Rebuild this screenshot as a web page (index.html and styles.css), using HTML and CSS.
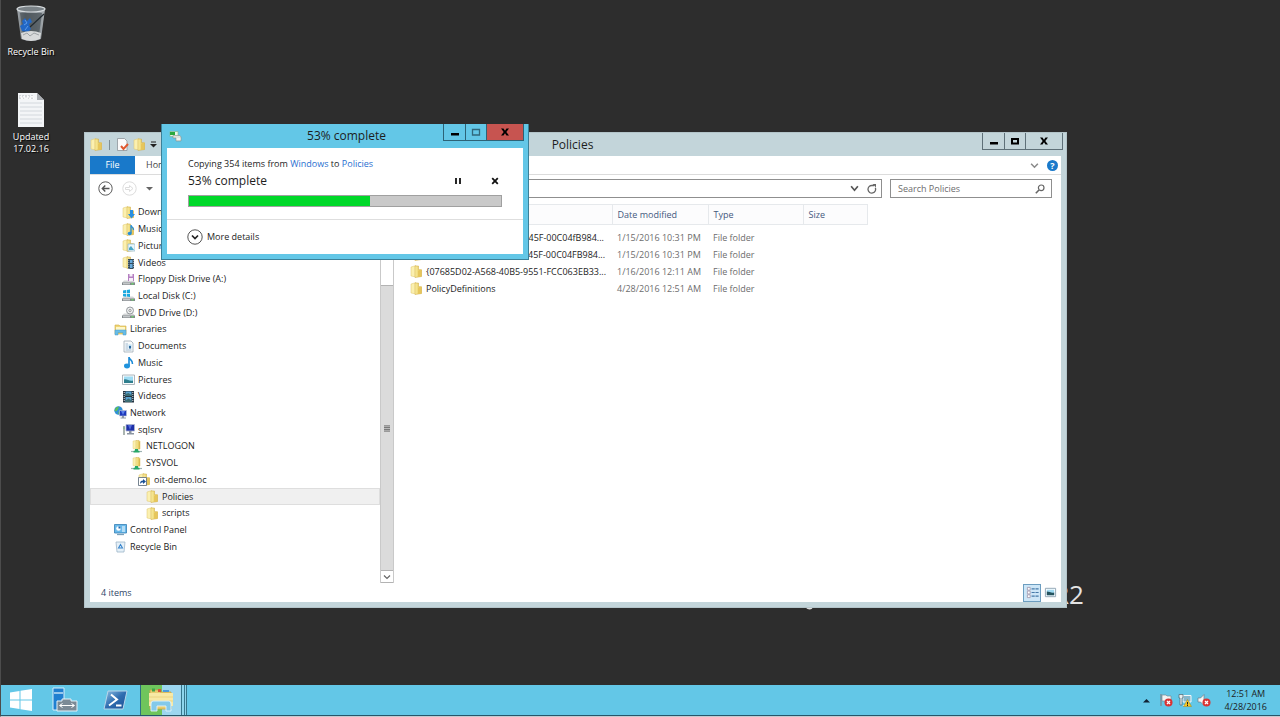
FILE: index.html
```html
<!DOCTYPE html>
<html lang="en">
<head>
<meta charset="utf-8">
<title>53% complete</title>
<link rel="stylesheet" href="styles.css">
</head>
<body>
<svg class="defs" aria-hidden="true">
  <defs>
    <linearGradient id="gold" x1="0" x2="1" y1="0" y2="0"><stop offset="0" stop-color="#fbf0a8"/><stop offset="0.45" stop-color="#efd978"/><stop offset="1" stop-color="#d6b548"/></linearGradient>
    <linearGradient id="glass" x1="0" x2="1" y1="0" y2="0"><stop offset="0" stop-color="#b9c0c5"/><stop offset="0.3" stop-color="#69727a"/><stop offset="0.7" stop-color="#8b949b"/><stop offset="1" stop-color="#c5cbcf"/></linearGradient>
    <linearGradient id="ps" x1="0" x2="1" y1="0" y2="1"><stop offset="0" stop-color="#8fc0e4"/><stop offset="0.5" stop-color="#2f6db0"/><stop offset="1" stop-color="#1b4f94"/></linearGradient>
    <symbol id="folder" viewBox="0 0 13 13">
      <path d="M1 2l5-1.500v11.500l-5-1z" fill="#fbf0b0" stroke="#dfc76c" stroke-width=".5"/>
      <path d="M5 1h3.500v3.500l3 .5v6.500l-3 .5-3.500.5z" fill="url(#gold)" stroke="#cfa942" stroke-width=".5"/>
      <path d="M8 6l3.500-2v7.500l-3.500.5z" fill="#e6c65c"/>
    </symbol>
    <symbol id="f-down" viewBox="0 0 13 13"><use href="#folder"/><path d="M8 4h3v4h2l-3.500 4.500L6 8h2z" fill="#2a8fe0"/></symbol>
    <symbol id="f-music" viewBox="0 0 13 13"><use href="#folder"/><path d="M9 2v8M9 2c0 2 3 2.500 2.500 5" fill="none" stroke="#258ed8" stroke-width="1.300"/><ellipse cx="7.700" cy="10.500" rx="2" ry="1.700" fill="#258ed8"/></symbol>
    <symbol id="f-pic" viewBox="0 0 13 13"><use href="#folder"/><path d="M6 5h7v7H6z" fill="#e8f6fc" stroke="#8cb4c8" stroke-width=".7"/><path d="M7 11V9l2-2 3 4z" fill="#4aa7c6"/></symbol>
    <symbol id="f-video" viewBox="0 0 13 13"><use href="#folder"/><path d="M6 3h6v10H6z" fill="#334b5c"/><path d="M8 4h2.500v3H8zM8 8h2.500v4H8z" fill="#67aadb"/><path d="M6.800 4v9M11.500 4v9" stroke="#d8e1e6" stroke-width=".6" stroke-dasharray="1 1"/></symbol>
    <symbol id="drive" viewBox="0 0 13 13"><path d="M2 7.500h9l2 2v2.500H0V9.500z" fill="#d4d6d7"/><path d="M0 9.500h13V12H0z" fill="#83898c"/><path d="M1 10.800h7" stroke="#dfe2e3"/><path d="M9.500 10h2v1.500h-2z" fill="#6bd46b"/></symbol>
    <symbol id="floppy" viewBox="0 0 13 13"><use href="#drive"/><path d="M6 1h6v7H6z" fill="#b57fc2"/><path d="M7.500 1h3v2.500h-3zM7 5h4v3H7z" fill="#f6eff8"/></symbol>
    <symbol id="cdisk" viewBox="0 0 13 13"><use href="#drive"/><path d="M1 1.500L4 1v3H1zM4.700 1L8 .5V4H4.700zM1 4.700h3v3L1 7.200zM4.700 4.700H8V8l-3.300-.4z" fill="#1aa8df"/></symbol>
    <symbol id="dvd" viewBox="0 0 13 13"><use href="#drive"/><circle cx="8" cy="4.500" r="3.500" fill="#eceeef" stroke="#8d9295" stroke-width=".9"/><circle cx="8" cy="4.500" r="1.100" fill="#fff" stroke="#777" stroke-width=".7"/></symbol>
    <symbol id="lib" viewBox="0 0 13 13"><path d="M1 2h4l1 1h6v8H1z" fill="#efd676" stroke="#d0ac45" stroke-width=".6"/><path d="M2 4h9v3H2z" fill="#fff7c8"/><path d="M1 7h11v5H9V9.500H4V12H1z" fill="#68bde7" stroke="#4498c8" stroke-width=".5"/></symbol>
    <symbol id="doc" viewBox="0 0 13 13"><path d="M2 1h7l2 2v9H2z" fill="#f8fafb" stroke="#9fabb5" stroke-width=".8"/><path d="M3.500 4H6M3.500 6H6M3.500 8H6M3.500 10h6" stroke="#8aa9c6" stroke-width=".8"/><path d="M6.500 4.500h3v4h-3z" fill="#b5dcf2"/><path d="M7 6h2v2.500H7z" fill="#2c669c"/></symbol>
    <symbol id="note" viewBox="0 0 13 13"><path d="M7 1v9M7 1c0 3 4 2.500 3.500 7" fill="none" stroke="#1889d6" stroke-width="1.600"/><ellipse cx="5" cy="10" rx="3" ry="2.400" fill="#1f93dd"/></symbol>
    <symbol id="pic" viewBox="0 0 13 13"><path d="M.5 2h12v9.500H.5z" fill="#f9fbfc" stroke="#9aa6ad" stroke-width=".8"/><path d="M2 3.500h9V10H2z" fill="#9edcf4"/><path d="M2 6.500c3-1 5 2 9 1V10H2z" fill="#2e7e8d"/></symbol>
    <symbol id="film" viewBox="0 0 13 13"><path d="M1 1h11v11.500H1z" fill="#243441"/><path d="M3.500 1.500h6v4.500h-6zM3.500 7h6v5h-6z" fill="#58a1cf"/><path d="M3.500 4l3-1 3 2v1h-6zM3.500 10.500l3-2 3 2V12h-6z" fill="#3c6d73"/><path d="M2.200 2v10M10.800 2v10" stroke="#edf1f3" stroke-width=".9" stroke-dasharray="1 1"/></symbol>
    <symbol id="net" viewBox="0 0 13 13"><circle cx="4.500" cy="4.500" r="4.200" fill="#2f8fd8"/><path d="M2 1.500l3-1-1 3-2 2-1.500-1zM5 5l2 .500-1 3-2-1z" fill="#61bf57"/><path d="M5.500 4.500h7V10h-7z" fill="#1d37ba" stroke="#b4c0d8" stroke-width=".7"/><path d="M7 5l4 0-2 4z" fill="#5b80ea"/><path d="M8 10h2v1.500h2v1H6.500v-1H8z" fill="#8c97a6"/></symbol>
    <symbol id="pc" viewBox="0 0 13 13"><path d="M1 3h2v9H1z" fill="#aab4b0"/><path d="M1.500 4.500h1v1h-1z" fill="#48b64d"/><path d="M4 1.500h8.500V8H4z" fill="#1d2fa8" stroke="#aeb8cf" stroke-width=".8"/><path d="M6 2h4L8 7z" fill="#536ad8"/><path d="M7 8h2.500v2H12v1.500H5V10h2z" fill="#8b95a1"/></symbol>
    <symbol id="share" viewBox="0 0 13 13"><path d="M3 1l3.500-.5v9l-3.500-1z" fill="#fbf0b0" stroke="#dfc76c" stroke-width=".4"/><path d="M6 .5h3l1 1V9L6 9.500z" fill="url(#gold)" stroke="#cfa942" stroke-width=".4"/><path d="M1 11.500h11" stroke="#9fb4b4" stroke-width="1.200"/><path d="M5 9h3v1.500l1.500.5v1.500H3.500V11L5 10.500z" fill="#28a869"/></symbol>
    <symbol id="f-link" viewBox="0 0 13 13"><use href="#folder"/><path d="M.5 4.500h8v8h-8z" fill="#fff" stroke="#567" stroke-width=".8"/><path d="M2 11c0-2.500 1-3.500 3-3.500V6l3 2.500-3 2.500V9.300C3.800 9.300 2.800 10 2 11z" fill="#1b5096"/></symbol>
    <symbol id="cpl" viewBox="0 0 13 13"><path d="M.5 1.500h12V10H.5z" fill="#69b9ea" stroke="#337fb5" stroke-width=".8"/><circle cx="4.500" cy="5.500" r="2.300" fill="#fff"/><path d="M4.500 5.500V3.200a2.300 2.300 0 0 1 2.300 2.300z" fill="#206db3"/><path d="M8 4h3M8 6h3M8 8h3" stroke="#fff"/><path d="M3 11.500h7" stroke="#7aa0ba" stroke-width="1.300"/></symbol>
    <symbol id="bin" viewBox="0 0 13 13"><path d="M2 2h9l-1 10H3z" fill="#e5f0f8" stroke="#9db5c8" stroke-width=".8"/><path d="M4.500 8L6.500 4.500 8.500 8z" fill="none" stroke="#3583cc" stroke-width="1.100"/></symbol>
  </defs>
</svg>

<main class="desktop">
  <span class="wallpaper-mark">R2</span>
  <svg class="wallpaper-tail" viewBox="0 0 8 4" aria-hidden="true"><path d="M1 0q3 3 6 1" fill="none" stroke="#ddd" stroke-width="1.500"/></svg>

  <a class="shortcut shortcut-bin" href="#bin">
    <svg viewBox="0 0 30 38">
      <path d="M1 4h28l-4 30q-10 4-20 0z" fill="url(#glass)" opacity=".85"/>
      <path d="M4 8h22l-3 22H7z" fill="#4a5258" opacity=".7"/>
      <ellipse cx="15" cy="4" rx="14" ry="3" fill="#7a8287" stroke="#d7dcdf" stroke-width="1.200"/>
      <path d="M6 16l3-3 2 3 3-3 2 4-3 2 2 5-3 3-6-1-2-5 3-2z" fill="#2167c5"/>
      <path d="M9 15l2 3-3 2M12 21l-3 4" fill="none" stroke="#5e9be8"/>
      <path d="M28 9L14 22" stroke="#222a30" stroke-width="1.200"/>
      <path d="M5 28q10-4 20 0l-1 6q-9 4-18 0z" fill="#d8dadb"/>
      <path d="M7 30l4-2 3 3 4-3 5 2" fill="none" stroke="#9ea3a6"/>
    </svg>
    <span>Recycle Bin</span>
  </a>
  <a class="shortcut shortcut-file" href="#updated">
    <svg viewBox="0 0 28 36">
      <path d="M1 1h19l7 7v27H1z" fill="#f3f5f7"/>
      <path d="M3 11h22M3 15h22M3 19h22M3 23h22M3 27h22M3 31h22" stroke="#d3d8dd"/>
      <path d="M3 3v4M6 3v4M9 3v4M12 3v4M15 3v4" stroke="#b5b9bd"/>
      <path d="M20 1v7h7z" fill="#a9adb2"/>
      <path d="M3 4l2 3 2-3 2 3 2-3 2 3 2-3 2 3" fill="none" stroke="#fff"/>
    </svg>
    <span>Updated 17.02.16</span>
  </a>

  <section class="window explorer" aria-label="Policies">
    <header class="titlebar">
      <div class="quick">
        <svg class="icon"><use href="#folder"/></svg>
        <i class="bar"></i>
        <svg class="icon" viewBox="0 0 13 13"><path d="M1.500.5h7L11 3v9.500H1.500z" fill="#fafafa" stroke="#8e969b" stroke-width=".8"/><path d="M5 8l2.500 3L12 6" fill="none" stroke="#e0592f" stroke-width="2"/></svg>
        <svg class="icon"><use href="#folder"/></svg>
        <svg class="tiny" viewBox="0 0 7 7"><path d="M1 1h5" stroke="#222"/><path d="M0 3h7L3.500 6.500z" fill="#222"/></svg>
      </div>
      <h1>Policies</h1>
      <div class="controls">
        <button class="b-min" aria-label="Minimize"><svg viewBox="0 0 10 10"><path d="M1 6h8v2.500H1z"/></svg></button>
        <button class="b-max" aria-label="Maximize"><svg viewBox="0 0 10 10"><path d="M1 2h8v6.500H1zM3 4v2.500h4V4z" fill-rule="evenodd"/></svg></button>
        <button class="b-close" aria-label="Close"><svg viewBox="0 0 10 10"><path d="M1 1.500h2.500L5 3.700l1.500-2.200H9L6.300 5 9 8.500H6.500L5 6.300 3.500 8.500H1L3.700 5z"/></svg></button>
      </div>
    </header>
    <div class="client">
      <nav class="ribbon">
        <button class="file-tab">File</button>
        <button class="tab">Home</button>
        <svg class="chev" viewBox="0 0 8 8"><path d="M1 2.500l3 3 3-3" fill="none" stroke="#8a8a8a" stroke-width="1.400"/></svg>
        <button class="help" aria-label="Help">?</button>
      </nav>
      <div class="navrow">
        <button class="round" aria-label="Back"><svg viewBox="0 0 15 15"><circle cx="7.500" cy="7.500" r="6.700" fill="#fff" stroke="#5b5b5b"/><path d="M11.500 7.500h-7M7.300 4.500l-3 3 3 3" fill="none" stroke="#555" stroke-width="1.400"/></svg></button>
        <button class="round" aria-label="Forward"><svg viewBox="0 0 15 15"><circle cx="7.500" cy="7.500" r="6.700" fill="#fff" stroke="#dcdcdc"/><path d="M3.500 6.500h4v-2l3.500 3-3.500 3v-2h-4z" fill="none" stroke="#dcdcdc"/></svg></button>
        <svg class="tiny" viewBox="0 0 7 7"><path d="M0 2h7L3.500 5.500z" fill="#666"/></svg>
        <div class="address">
          <svg class="chev" viewBox="0 0 8 8"><path d="M1 2l3 3.500L7 2" fill="none" stroke="#555" stroke-width="1.500"/></svg>
          <svg class="reload" viewBox="0 0 10 10"><path d="M8.300 3.800A3.800 3.800 0 1 1 5 1.500h2" fill="none" stroke="#666" stroke-width="1.300"/><path d="M5.500 0H9v3.500z" fill="#666"/></svg>
        </div>
        <label class="search"><input type="text" placeholder="Search Policies" aria-label="Search Policies"><svg viewBox="0 0 10 10"><circle cx="6.200" cy="3.800" r="2.800" fill="none" stroke="#666" stroke-width="1.200"/><path d="M4 6L.8 9.200" stroke="#666" stroke-width="1.600"/></svg></label>
      </div>
      <div class="panes">
        <ul class="tree">
          <li class="l2"><svg class="icon"><use href="#f-down"/></svg>Downloads</li>
          <li class="l2"><svg class="icon"><use href="#f-music"/></svg>Music</li>
          <li class="l2"><svg class="icon"><use href="#f-pic"/></svg>Pictures</li>
          <li class="l2"><svg class="icon"><use href="#f-video"/></svg>Videos</li>
          <li class="l2"><svg class="icon"><use href="#floppy"/></svg>Floppy Disk Drive (A:)</li>
          <li class="l2"><svg class="icon"><use href="#cdisk"/></svg>Local Disk (C:)</li>
          <li class="l2"><svg class="icon"><use href="#dvd"/></svg>DVD Drive (D:)</li>
          <li class="l1"><svg class="icon"><use href="#lib"/></svg>Libraries</li>
          <li class="l2"><svg class="icon"><use href="#doc"/></svg>Documents</li>
          <li class="l2"><svg class="icon"><use href="#note"/></svg>Music</li>
          <li class="l2"><svg class="icon"><use href="#pic"/></svg>Pictures</li>
          <li class="l2"><svg class="icon"><use href="#film"/></svg>Videos</li>
          <li class="l1"><svg class="icon"><use href="#net"/></svg>Network</li>
          <li class="l2"><svg class="icon"><use href="#pc"/></svg>sqlsrv</li>
          <li class="l3"><svg class="icon"><use href="#share"/></svg>NETLOGON</li>
          <li class="l3"><svg class="icon"><use href="#share"/></svg>SYSVOL</li>
          <li class="l4"><svg class="icon"><use href="#f-link"/></svg>oit-demo.loc</li>
          <li class="l5 selected"><svg class="icon"><use href="#folder"/></svg>Policies</li>
          <li class="l5"><svg class="icon"><use href="#folder"/></svg>scripts</li>
          <li class="l1"><svg class="icon"><use href="#cpl"/></svg>Control Panel</li>
          <li class="l1"><svg class="icon"><use href="#bin"/></svg>Recycle Bin</li>
        </ul>
        <div class="scroll">
          <div class="thumb"><svg viewBox="0 0 7 7"><path d="M0 .5h7M0 2.500h7M0 4.500h7M0 6.500h7" stroke="#555"/></svg></div>
          <button class="down" aria-label="Scroll down"><svg viewBox="0 0 8 8"><path d="M1 2.500l3 3 3-3" fill="none" stroke="#666" stroke-width="1.200"/></svg></button>
        </div>
        <div class="list">
          <table>
            <colgroup><col class="c-name"><col class="c-date"><col class="c-type"><col class="c-size"></colgroup>
            <thead><tr><th>Name</th><th>Date modified</th><th>Type</th><th>Size</th></tr></thead>
            <tbody>
              <tr><td><svg class="icon"><use href="#folder"/></svg>{31B2F340-016D-11D2-945F-00C04fB984...</td><td>1/15/2016 10:31 PM</td><td>File folder</td><td></td></tr>
              <tr><td><svg class="icon"><use href="#folder"/></svg>{6AC1786C-016F-11D2-945F-00C04FB984...</td><td>1/15/2016 10:31 PM</td><td>File folder</td><td></td></tr>
              <tr><td><svg class="icon"><use href="#folder"/></svg>{07685D02-A568-40B5-9551-FCC063EB33...</td><td>1/16/2016 12:11 AM</td><td>File folder</td><td></td></tr>
              <tr><td><svg class="icon"><use href="#folder"/></svg>PolicyDefinitions</td><td>4/28/2016 12:51 AM</td><td>File folder</td><td></td></tr>
            </tbody>
          </table>
        </div>
      </div>
      <footer class="status">
        <span>4 items</span>
        <button class="view on" aria-label="Details view"><svg viewBox="0 0 14 14"><path d="M1.500 1.500h3v3h-3zM1.500 5.500h3v3h-3zM1.500 9.500h3v3h-3z" fill="#fff" stroke="#9a8ea5" stroke-width=".8"/><path d="M6 3h8M6 7h8M6 11h8" stroke="#4679a8" stroke-width="1.300" stroke-dasharray="3.400 .8"/></svg></button>
        <button class="view" aria-label="Large icons view"><svg viewBox="0 0 14 14"><path d="M1.500 2.500h11v9h-11z" fill="#fff" stroke="#8ea3b3"/><path d="M3 4h8v6H3z" fill="#9fdaf2"/><path d="M3 6c3 0 5 2 8 1v3H3z" fill="#24525e"/></svg></button>
      </footer>
    </div>
  </section>

  <section class="window dialog" role="dialog" aria-label="53% complete">
    <header class="titlebar">
      <svg class="icon" viewBox="0 0 13 13"><path d="M1 1.500h8v5H1z" fill="#eaf7e7" stroke="#82b584" stroke-width=".6"/><path d="M1 2h5v3H1z" fill="#28a83d"/><path d="M4 5.500h7l1 1.500v4H7V8H4z" fill="#dfe4df" stroke="#89928b" stroke-width=".6"/><path d="M7.500 9h4" stroke="#fff"/></svg>
      <h2>53% complete</h2>
      <div class="controls">
        <button class="b-min" aria-label="Minimize"><svg viewBox="0 0 10 10"><path d="M1 6h8v2.500H1z"/></svg></button>
        <button class="b-max" aria-label="Maximize" disabled><svg viewBox="0 0 10 10"><path d="M1.500 2.500h7v5.500h-7z" fill="none" stroke="#31687c" stroke-width="1.300"/></svg></button>
        <button class="b-close" aria-label="Close"><svg viewBox="0 0 10 10"><path d="M1 1.500h2.500L5 3.700l1.500-2.200H9L6.300 5 9 8.500H6.500L5 6.300 3.500 8.500H1L3.700 5z"/></svg></button>
      </div>
    </header>
    <div class="client">
      <div class="copy">
        <p>Copying 354 items from <a href="#windows">Windows</a> to <a href="#policies">Policies</a></p>
        <div class="state">
          <strong id="pct">53% complete</strong>
          <button aria-label="Pause"><svg viewBox="0 0 8 8"><path d="M2 1v6M6 1v6" stroke="#111" stroke-width="1.800"/></svg></button>
          <button aria-label="Cancel"><svg viewBox="0 0 8 8"><path d="M1.200 1.200l5.600 5.600M6.800 1.200L1.200 6.800" stroke="#111" stroke-width="1.800"/></svg></button>
        </div>
        <progress max="100" value="58" aria-labelledby="pct"></progress>
      </div>
      <button class="more"><svg viewBox="0 0 16 16"><circle cx="8" cy="8" r="7.200" fill="#fff" stroke="#555"/><path d="M5 6.500l3 3 3-3" fill="none" stroke="#222" stroke-width="1.700"/></svg>More details</button>
    </div>
  </section>
</main>

<footer class="taskbar">
  <button aria-label="Start"><svg class="start" viewBox="0 0 22 22"><path d="M0 3.500L9.500 2v8.500H0zM10.500 1.800L22 0v10.500H10.500zM0 11.500h9.500V20L0 18.500zM10.500 11.500H22V22l-11.500-1.700z" fill="#fff"/></svg></button>
  <button aria-label="Server Manager"><svg class="app" viewBox="0 0 26 26"><path d="M1 1h11v22H1z" fill="#1f7fd0" stroke="#d8effa"/><path d="M2 6h9" stroke="#d8effa" stroke-width="1.300"/><path d="M10 14v-2h9v2h6v10H5V14z" fill="#7b8a96" stroke="#e6f2f8"/><path d="M8 18.500h14M10.500 16.500l-3 2 3 2M19.500 16.500l3 2-3 2" fill="none" stroke="#fff"/></svg></button>
  <button aria-label="PowerShell"><svg class="app" viewBox="0 0 26 26"><path d="M6 4h19l-4 18H2z" fill="url(#ps)" stroke="#b8d5e9"/><path d="M9 7.500l6 5-8 6M14 18.500h5.500" fill="none" stroke="#fff" stroke-width="2"/></svg></button>
  <button class="active" aria-label="File Explorer"><svg class="app" viewBox="0 0 26 26"><path d="M2 3h8l2 2h11v17H2z" fill="#e9cd70" stroke="#c7a345" stroke-width=".8"/><path d="M4 1.500h3v3H4z" fill="#3fa64a"/><path d="M10 2h3v3h-3z" fill="#d8523b"/><path d="M15 3h6v2h-6z" fill="#4c9cda"/><path d="M1 6h24v13H1z" fill="#f8e9a5"/><path d="M1 10h24M1 14h24" stroke="#ebd382"/><path d="M5 14h16q2 0 2 3v7h-5v-5H9v5H3v-7q0-3 2-3z" fill="#83c9ea" stroke="#e3f4fb" stroke-width=".9"/></svg></button>
  <i class="stack"></i>
  <i class="stack"></i>
  <div class="tray">
    <svg class="up" viewBox="0 0 7 7"><path d="M0 5.500L3.500 2 7 5.500z" fill="#123"/></svg>
    <svg viewBox="0 0 14 14"><path d="M2 1v12" stroke="#7b8a92" stroke-width="1.300"/><path d="M3 2h4l1 1h4v6H8L7 8H3z" fill="#f4f4f4" stroke="#7b8a92" stroke-width=".7"/><circle cx="9.500" cy="9.500" r="4" fill="#d93434"/><path d="M8 8l3 3M11 8l-3 3" stroke="#fff" stroke-width="1.300"/></svg>
    <svg viewBox="0 0 14 14"><path d="M5 2.500h8V9H5z" fill="#84b7cc" stroke="#f4f8fa"/><path d="M1 1.500h4V5H4v7H2V5H1z" fill="#e8eef0" stroke="#4c6570" stroke-width=".7"/><path d="M5 12.500h6" stroke="#eee"/><path d="M9.500 6.500l4 7h-8z" fill="#f6c822" stroke="#a7801b" stroke-width=".5"/><path d="M9.500 9v2.500M9.500 12v1" stroke="#222"/></svg>
    <svg viewBox="0 0 14 14"><path d="M1 5h2.500L7 1.500v11L3.500 9H1z" fill="#f6f6f6" stroke="#6a7d87" stroke-width=".7"/><circle cx="9.500" cy="9.500" r="4" fill="#d93434"/><path d="M8 8l3 3M11 8l-3 3" stroke="#fff" stroke-width="1.300"/></svg>
    <time datetime="2016-04-28T00:51">12:51 AM<br>4/28/2016</time>
  </div>
</footer>
</body>
</html>
```
FILE: styles.css
```css
* { box-sizing: border-box; }

body {
  margin: 0;
  height: 100vh;
  display: flex;
  flex-direction: column;
  overflow: hidden;
  background: #2d2d2d;
  border-left: 1px solid #4c4c4c;
  border-bottom: 1px solid #c4ccd0;
  font: 9px/16px "Open Sans", "Noto Sans", sans-serif;
  color: #1d1d1d;
}

button {
  font: inherit;
  color: inherit;
  border: 0;
  padding: 0;
  background: none;
  display: flex;
  align-items: center;
  justify-content: center;
}

a { color: #2a6fd0; text-decoration: none; }
svg { display: block; flex: none; }
.defs { position: absolute; width: 0; height: 0; }
.icon { width: 13px; height: 13px; }
.tiny { width: 7px; height: 7px; }
.chev { width: 9px; height: 9px; }

.desktop { position: relative; flex: 1; min-height: 0; }

.wallpaper-mark {
  position: absolute;
  left: 1052px;
  top: 576px;
  font-size: 26px;
  line-height: 36px;
  color: #e4e4e4;
}
.wallpaper-tail { position: absolute; left: 804px; top: 607px; width: 8px; height: 4px; }

.shortcut {
  position: absolute;
  left: 0;
  width: 60px;
  display: flex;
  flex-direction: column;
  align-items: center;
  gap: 3px;
  color: #fff;
  line-height: 12px;
  text-align: center;
  text-shadow: 1px 1px 1px #000;
}
.shortcut-bin { top: 5px; }
.shortcut-bin svg { width: 30px; height: 38px; }
.shortcut-file { top: 92px; }
.shortcut-file svg { width: 28px; height: 36px; }
.shortcut span { width: 52px; }

.window {
  position: absolute;
  display: flex;
  flex-direction: column;
  padding: 0 5px 5px;
}
.window .client { flex: 1; min-height: 0; display: flex; flex-direction: column; background: #fff; }

.titlebar { display: flex; align-items: center; height: 24px; flex: none; }
.titlebar h1, .titlebar h2 {
  flex: 1;
  margin: 0;
  text-align: center;
  font-size: 12px;
  font-weight: 400;
}
.controls { display: flex; align-self: flex-start; border: 1px solid #5e7078; border-top: 0; }
.controls button { height: 16px; width: 21px; border-right: 1px solid #5e7078; }
.controls svg { width: 10px; height: 10px; }
.controls .b-min { width: 22px; }
.controls .b-close { width: 36px; border-right: 0; }

.explorer {
  left: 83px;
  top: 132px;
  width: 983px;
  height: 476px;
  background: #c3d5da;
  border: 1px solid #b3c4c9;
}
.explorer .titlebar { height: 23px; }
.explorer .controls { margin-right: -2px; }
.quick { display: flex; align-items: center; gap: 4px; width: 73px; }
.quick .bar { width: 1px; height: 10px; margin: 0 2px; background: #7c8d94; }

.ribbon {
  display: flex;
  align-items: center;
  height: 19px;
  flex: none;
  padding-right: 3px;
  border-bottom: 1px solid #dcdcdc;
}
.file-tab { width: 45px; height: 18px; background: #1979ca; color: #fff; }
.tab { margin-left: 11px; color: #444; }
.ribbon .chev { margin-left: auto; }
.help {
  width: 11px;
  height: 11px;
  margin-left: 8px;
  border-radius: 50%;
  background: #1979ca;
  color: #fff;
  font-weight: 700;
  line-height: 11px;
}

.navrow { display: flex; align-items: center; height: 29px; flex: none; padding: 0 9px 2px 8px; }
.round { margin-right: 9px; }
.round svg { width: 15px; height: 15px; }
.address {
  flex: 1;
  display: flex;
  justify-content: flex-end;
  align-items: center;
  gap: 8px;
  height: 19px;
  margin: 0 8px 0 32px;
  padding-right: 4px;
  border: 1px solid #8f8f8f;
}
.reload { width: 10px; height: 10px; }
.search {
  width: 162px;
  height: 19px;
  display: flex;
  align-items: center;
  padding: 0 6px 0 7px;
  border: 1px solid #8f8f8f;
}
.search input { flex: 1; min-width: 0; padding: 0; border: 0; outline: 0; font: inherit; background: none; }
.search input::placeholder { color: #6d6d6d; }
.search svg { width: 10px; height: 10px; }

.panes { flex: 1; min-height: 0; display: flex; }
.tree {
  width: 290px;
  height: 351px;
  margin: 0;
  padding: 0;
  list-style: none;
  display: grid;
  grid-template-rows: repeat(21, 1fr);
}
.tree li { display: flex; align-items: center; gap: 3px; border: 1px solid transparent; min-height: 0; }
.tree .l1 { padding-left: 23px; }
.tree .l2 { padding-left: 31px; }
.tree .l3 { padding-left: 39px; }
.tree .l4 { padding-left: 47px; }
.tree .l5 { padding-left: 55px; }
.tree .selected { background: #f0f0f0; border-color: #dedede; }

.scroll {
  width: 14px;
  display: flex;
  flex-direction: column;
  padding-top: 81px;
  border-right: 1px solid #c9c9c9;
  border-left: 1px solid #c9c9c9;
  align-self: stretch;
}
.thumb {
  flex: 1;
  display: flex;
  align-items: center;
  justify-content: center;
  background: #dbdbdb;
  border-top: 1px solid #b3b3b3;
}
.thumb svg { width: 6px; height: 7px; }
.down { height: 13px; border: 1px solid #b3b3b3; border-width: 1px 0; }
.down svg { width: 8px; height: 8px; }

.list { flex: 1; padding-left: 7px; }
table { table-layout: fixed; width: 466px; border-collapse: collapse; }
.c-name { width: 211px; }
.c-date { width: 96px; }
.c-type { width: 95px; }
.c-size { width: 64px; }
th, td { padding: 0 0 0 5px; text-align: left; font-weight: 400; white-space: nowrap; }
th { height: 20px; color: #44597e; background: #fcfcfd; border: 1px solid #e6e9ec; border-width: 1px 1px 1px 0; }
td { height: 17px; line-height: 17px; color: #6d6d6d; }
td:first-child { display: flex; align-items: center; gap: 3px; padding-left: 9px; color: #1d1d1d; }
tbody::before { content: ""; display: block; height: 4px; }

.status { display: flex; align-items: center; height: 19px; flex: none; padding: 0 2px 0 11px; color: #2f4668; }
.status span { margin-right: auto; }
.view { width: 18px; height: 18px; }
.view.on { background: #cde6f7; border: 1px solid #6c9dc0; }
.view svg { width: 13px; height: 13px; }

.dialog {
  left: 160px;
  top: 124px;
  width: 368px;
  height: 136px;
  background: #63c7e7;
  border: 1px solid #3b8199;
  border-top: 0;
}
.dialog .titlebar .icon { margin-left: 2px; }
.dialog .controls { margin: 0 -1px 0 -68px; border-color: #2c6377; }
.dialog .controls button { border-color: #2c6377; }
.dialog .controls .b-close { background: #c75450; }
.copy { padding: 7px 21px 0; height: 72px; border-bottom: 1px solid #dedede; }
.copy p { margin: 0; line-height: 18px; }
.state { display: flex; align-items: center; height: 16px; padding-right: 3px; }
.state strong { margin-right: auto; font-size: 12px; font-weight: 400; }
.state button { width: 8px; height: 8px; margin-left: 29px; }
.state svg { width: 8px; height: 8px; }
progress {
  display: block;
  appearance: none;
  width: 100%;
  height: 12px;
  margin-top: 6px;
  border: 1px solid #a0a0a0;
  background: #c9c9c9;
}
progress::-webkit-progress-bar { background: #c9c9c9; }
progress::-webkit-progress-value { background: #00d829; }
.more { margin: 9px 0 0 20px; align-self: flex-start; gap: 4px; }
.more svg { width: 16px; height: 16px; }

.taskbar {
  display: flex;
  align-items: stretch;
  height: 31px;
  flex: none;
  background: #63c7e7;
  border-bottom: 1px solid #27566a;
}
.taskbar > button { width: 50px; }
.taskbar > button:first-child { width: 39px; }
.start { width: 22px; height: 22px; }
.app { width: 26px; height: 26px; }
.taskbar > .active {
  width: 41px;
  border-left: 1px solid #2e6f85;
  background: linear-gradient(to right, #6fc55c 53%, #9cd6ef 53%);
}
.stack { width: 3px; border-left: 1px solid #35768c; background: #8fd5ec; }
.stack + .stack { border-right: 1px solid #35768c; }
.tray { display: flex; align-items: center; gap: 5px; margin-left: auto; padding-right: 13px; }
.tray svg { width: 14px; height: 14px; }
.tray .up { width: 7px; height: 7px; margin-right: 4px; }
.tray time { margin-left: 8px; line-height: 13px; text-align: center; }
```
